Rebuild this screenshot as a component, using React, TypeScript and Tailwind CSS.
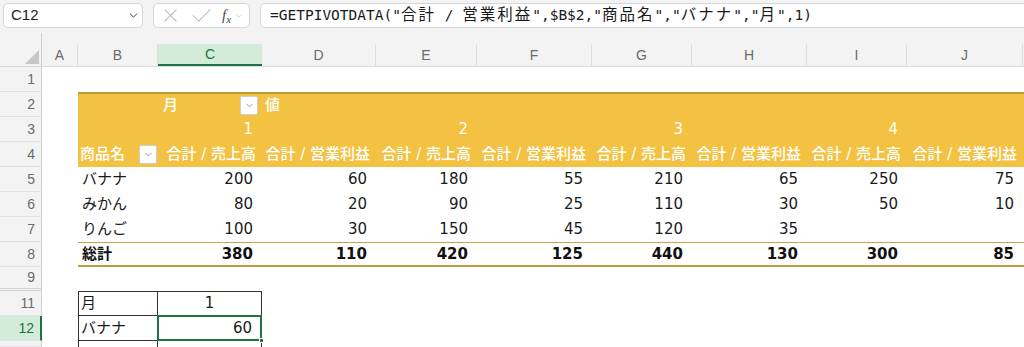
import React from "react";

const cellFont = { fontFamily: '"DejaVu Sans", "Noto Sans CJK JP", sans-serif' };

const DATA: { name: string; vals: (number | "")[] }[] = [
  { name: "バナナ", vals: [200, 60, 180, 55, 210, 65, 250, 75] },
  { name: "みかん", vals: [80, 20, 90, 25, 110, 30, 50, 10] },
  { name: "りんご", vals: [100, 30, 150, 45, 120, 35, "", ""] },
];
const TOTALS = [380, 110, 420, 125, 440, 130, 300, 85];

const VALCOLS = [
  "w-[104px]",
  "w-[114px]",
  "w-[101px]",
  "w-[115px]",
  "w-[100px]",
  "w-[115px]",
  "w-[100px]",
  "w-[116px]",
];

function Chevron({ className }: { className?: string }) {
  return (
    <svg viewBox="0 0 10 6" className={className} fill="none" stroke="currentColor" strokeWidth="1.2" strokeLinecap="round" strokeLinejoin="round">
      <path d="M1 1 L5 5 L9 1" />
    </svg>
  );
}

function DropBtn() {
  return (
    <div className="w-[18px] h-[19px] shrink-0 bg-white border border-[#cfcfcf] rounded-[2px] flex items-center justify-center text-[#8a8a8a]">
      <Chevron className="w-[7px] h-[5px]" />
    </div>
  );
}

function RowHead({ n, active, extra }: { n?: string; active?: boolean; extra?: string }) {
  return (
    <div
      className={
        "w-[42px] shrink-0 flex items-center justify-end pr-[6px] text-[14px] " +
        (active
          ? "bg-[#d3ecd9] text-[#1e7145] border-r-2 border-r-[#1e7145] "
          : "bg-[#f3f3f3] text-[#6b6b6b] border-r border-r-[#cfcfcf] ") +
        (extra ?? "border-b border-b-[#e2e2e2]")
      }
      style={{ fontFamily: '"Liberation Sans", Arial, sans-serif' }}
    >
      {n}
    </div>
  );
}

function J({ children }: { children: React.ReactNode }) {
  return <span className="text-[15.5px] tracking-[2px]">{children}</span>;
}

function TopBar() {
  return (
    <div className="h-[33px] bg-[#f3f3f3] flex items-start pt-[3px] pl-[3px] overflow-hidden">
      <div
        className="w-[140px] shrink-0 h-[25px] bg-white border border-[#d6d6d6] rounded-[5px] flex items-center justify-between pl-[7px] pr-[4px] text-[15px] text-[#222]"
        style={{ fontFamily: '"Liberation Sans", Arial, sans-serif' }}
      >
        <span>C12</span>
        <Chevron className="w-[9px] h-[5px] text-[#444]" />
      </div>
      <div className="ml-[10px] w-[97px] shrink-0 h-[25px] bg-white border border-[#d6d6d6] rounded-[5px] flex items-center pl-[9px]">
        <svg viewBox="0 0 16 16" className="w-[15px] h-[15px] text-[#b9b9b9]" fill="none" stroke="currentColor" strokeWidth="1.1" strokeLinecap="round">
          <path d="M2 2 L14 14 M14 2 L2 14" />
        </svg>
        <svg viewBox="0 0 20 16" className="ml-[14px] w-[19px] h-[15px] text-[#b9b9b9]" fill="none" stroke="currentColor" strokeWidth="1.1" strokeLinecap="round" strokeLinejoin="round">
          <path d="M1 8 L7 14 L19 2" />
        </svg>
        <span
          className="ml-[11px] text-[#4a4a4a] text-[15px] leading-none flex items-end"
          style={{ fontFamily: '"Liberation Serif", "Times New Roman", serif' }}
        >
          <span className="italic">f</span>
          <span className="italic text-[11px] translate-y-[2px]">x</span>
        </span>
        <Chevron className="ml-[5px] w-[6px] h-[4px] text-[#bdbdbd]" />
      </div>
      <div
        className="ml-[10px] w-[800px] shrink-0 h-[25px] bg-white border border-[#d6d6d6] rounded-[5px] flex items-center pl-[9px] text-[14.5px] text-[#1a1a1a] whitespace-pre"
        style={{ fontFamily: '"DejaVu Sans Mono", "Noto Sans CJK JP", monospace' }}
      >
        <span>
          {'=GETPIVOTDATA("'}<J>合計</J>{" / "}<J>営業利益</J>{'",$B$2,"'}<J>商品名</J>{'","'}<J>バナナ</J>{'","'}<J>月</J>{'",1)'}
        </span>
      </div>
    </div>
  );
}

function ColHeader() {
  const cols: { l: string; w: string; active?: boolean }[] = [
    { l: "A", w: "w-[36px]" },
    { l: "B", w: "w-[80px]" },
    { l: "C", w: "w-[104px]", active: true },
    { l: "D", w: "w-[114px]" },
    { l: "E", w: "w-[101px]" },
    { l: "F", w: "w-[115px]" },
    { l: "G", w: "w-[100px]" },
    { l: "H", w: "w-[115px]" },
    { l: "I", w: "w-[100px]" },
    { l: "J", w: "w-[116px]" },
  ];
  return (
    <div
      className="h-[34px] flex bg-[#f3f3f3] border-b border-[#d9d9d9]"
      style={{ fontFamily: '"Liberation Sans", Arial, sans-serif' }}
    >
      <div className="w-[42px] shrink-0 border-r border-[#cfcfcf] flex items-end justify-end pr-[2px] pb-[2px]">
        <svg viewBox="0 0 14 14" className="w-[14px] h-[14px]">
          <path d="M14 0 L14 14 L0 14 Z" fill="#c6c6c6" />
        </svg>
      </div>
      {cols.map((c) => (
        <div key={c.l} className={c.w + " shrink-0 flex items-end"}>
          <div
            className={
              "w-full h-[22px] flex items-center justify-center text-[14px] " +
              (c.active
                ? "bg-[#d3ecd9] text-[#1e7145] border-b-2 border-[#217346]"
                : "text-[#6b6b6b] border-r border-[#dedede]")
            }
          >
            {c.l}
          </div>
        </div>
      ))}
    </div>
  );
}

export default function App() {
  return (
    <div className="w-[1024px] h-[347px] overflow-hidden bg-white" style={cellFont}>
      <TopBar />
      <ColHeader />

      {/* Row 1 */}
      <div className="flex h-[25px]">
        <RowHead n="1" />
      </div>

      {/* Row 2 */}
      <div className="flex h-[25px]">
        <RowHead n="2" />
        <div className="w-[36px] shrink-0" />
        <div className="flex-1 flex bg-[#f4c242] border-t-2 border-[#bf983c] text-white font-medium text-[15px]">
          <div className="w-[80px] shrink-0" />
          <div className="w-[104px] shrink-0 flex items-center justify-between pl-[5px] pr-[4px]">
            <span>月</span>
            <DropBtn />
          </div>
          <div className="w-[114px] shrink-0 flex items-center pl-[3px]">値</div>
        </div>
      </div>

      {/* Row 3 */}
      <div className="flex h-[25px]">
        <RowHead n="3" />
        <div className="w-[36px] shrink-0" />
        <div className="flex-1 flex bg-[#f4c242] text-white font-medium text-[15px]">
          <div className="w-[80px] shrink-0" />
          {VALCOLS.map((w, i) => (
            <div key={i} className={w + " shrink-0 flex items-center justify-end pr-[9px]"}>
              {i % 2 === 0 ? String(i / 2 + 1) : ""}
            </div>
          ))}
        </div>
      </div>

      {/* Row 4 */}
      <div className="flex h-[25px]">
        <RowHead n="4" />
        <div className="w-[36px] shrink-0" />
        <div className="flex-1 flex bg-[#f4c242] text-white font-medium text-[15px] whitespace-nowrap">
          <div className="w-[80px] shrink-0 flex items-center justify-between pl-[2px] pr-[1px]">
            <span>商品名</span>
            <DropBtn />
          </div>
          {VALCOLS.map((w, i) => (
            <div key={i} className={w + " shrink-0 flex items-center justify-end pr-[6px]"}>
              {i % 2 === 0 ? "合計 / 売上高" : "合計 / 営業利益"}
            </div>
          ))}
        </div>
      </div>

      {/* Rows 5-7 */}
      {DATA.map((r, ri) => (
        <div key={r.name} className="flex h-[25px]">
          <RowHead n={String(ri + 5)} />
          <div className="w-[36px] shrink-0" />
          <div className="flex-1 flex text-[15px] text-[#1a1a1a]">
            <div className="w-[80px] shrink-0 flex items-center pl-[4px]">{r.name}</div>
            {VALCOLS.map((w, i) => (
              <div key={i} className={w + " shrink-0 flex items-center justify-end pr-[9px]"}>
                {r.vals[i]}
              </div>
            ))}
          </div>
        </div>
      ))}

      {/* Row 8 */}
      <div className="flex h-[25px]">
        <RowHead n="8" />
        <div className="w-[36px] shrink-0" />
        <div className="flex-1 flex text-[15px] text-[#111] font-bold border-t border-[#cda24a] border-b-2 border-b-[#c4993a]">
          <div className="w-[80px] shrink-0 flex items-center pl-[4px]">総計</div>
          {VALCOLS.map((w, i) => (
            <div key={i} className={w + " shrink-0 flex items-center justify-end pr-[9px]"}>
              {TOTALS[i]}
            </div>
          ))}
        </div>
      </div>

      {/* Row 9 */}
      <div className="flex h-[24px]">
        <RowHead n="9" extra="border-b-[3px] border-double border-b-[#cfcfcf]" />
      </div>

      {/* Row 11 */}
      <div className="flex h-[25px] text-[15px] text-[#1a1a1a]">
        <RowHead n="11" />
        <div className="w-[36px] shrink-0" />
        <div className="w-[80px] shrink-0 flex items-center pl-[2px] border border-[#333]">月</div>
        <div className="w-[104px] shrink-0 flex items-center justify-center border-t border-r border-b border-[#333]">1</div>
      </div>

      {/* Row 12 */}
      <div className="flex h-[25px] text-[15px] text-[#1a1a1a]">
        <RowHead n="12" active />
        <div className="w-[36px] shrink-0" />
        <div className="w-[80px] shrink-0 flex items-center pl-[2px] border-l border-r border-b border-[#333]">バナナ</div>
        <div className="relative w-[104px] shrink-0 flex items-center justify-end pr-[9px] border-r border-b border-[#333]">
          60
          <div className="absolute left-[-1px] top-[-1px] right-[-1px] bottom-[-1px] border-2 border-[#217346]" />
          <div className="absolute right-[-3px] bottom-[-3px] w-[5px] h-[5px] bg-[#217346] border border-white" />
        </div>
      </div>

      {/* Row 13 */}
      <div className="flex h-[6px] text-[15px] text-[#1a1a1a]">
        <RowHead />
        <div className="w-[36px] shrink-0" />
        <div className="w-[80px] shrink-0 border-l border-r border-[#333]" />
        <div className="w-[104px] shrink-0 border-r border-[#333]" />
      </div>
    </div>
  );
}
